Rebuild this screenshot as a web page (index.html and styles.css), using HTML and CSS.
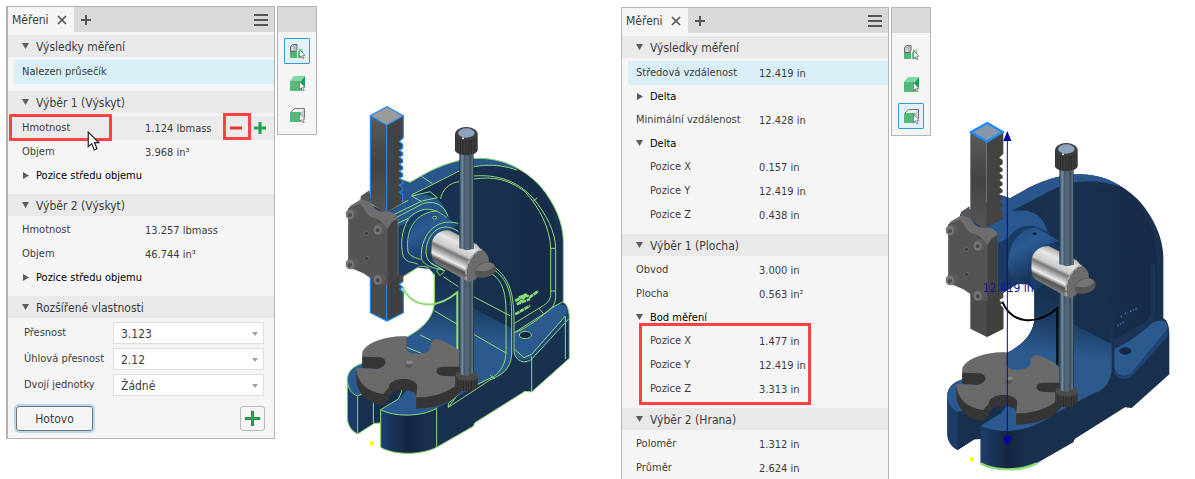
FILE: index.html
```html
<!DOCTYPE html>
<html lang="cs">
<head>
<meta charset="utf-8">
<title>Měření</title>
<link rel="stylesheet" href="styles.css">
</head>
<body>
<svg class="defs" aria-hidden="true">
  <defs>
    <symbol id="i-close" viewBox="0 0 10 10"><path d="M1 1l8 8M9 1l-8 8" stroke="#555" stroke-width="1.7"/></symbol>
    <symbol id="i-plus" viewBox="0 0 10 10"><path d="M5 0v10M0 5h10" stroke="#555" stroke-width="2"/></symbol>
    <symbol id="i-menu" viewBox="0 0 14 12"><path d="M0 1h14M0 6h14M0 11h14" stroke="#555" stroke-width="2"/></symbol>
    <symbol id="i-down" viewBox="0 0 7 7"><path d="M0 0h7L3.500 6z" fill="#5c5c5c"/></symbol>
    <symbol id="i-right" viewBox="0 0 7 7"><path d="M1 0l6 3.500L1 7z" fill="#5c5c5c"/></symbol>
    <symbol id="i-cursor" viewBox="0 0 12 19"><path d="M1 1v14l3.300-3 2.400 6 2.600-1.100L6.900 11H11z" fill="#fff" stroke="#1c1c2c" stroke-width="1.100"/></symbol>
    <g id="pointer"><path d="M10.500 6.500v8l2-1.700 1.300 3 1.300-.6-1.300-2.900h2.200z" fill="#fff" stroke="#666" stroke-width=".7"/></g>
    <symbol id="i-part" viewBox="0 0 17 17">
      <path d="M1 8h7v7H1z" fill="#4fb873"/><path d="M9 8h5v7H9z" fill="#62c986"/><path d="M11 6h3v2h-3z" fill="#8edba8"/>
      <path d="M1.500 3.500l2-2H8v5l-1.500 2h-5z" fill="#ccc" stroke="#666"/><path d="M1.500 3.500h4.500v4.500M6 3.500l2-2" fill="none" stroke="#999" stroke-width=".6"/>
      <use href="#pointer"/>
    </symbol>
    <symbol id="i-body" viewBox="0 0 17 17">
      <path d="M1 6h11v10H1z" fill="#55b97b"/><path d="M1 6l4-5h11l-4 5z" fill="#80d9a2"/><path d="M12 6l4-5v10l-4 5z" fill="#12a357"/>
      <use href="#pointer"/>
    </symbol>
    <symbol id="i-face" viewBox="0 0 17 17">
      <path d="M1.500 5.500l4-4h10v9l-4 4z" fill="#eee" stroke="#777"/><path d="M12 5l3-3v8l-3 4z" fill="#ccc"/><path d="M1 5h11v10H1z" fill="#55b97b"/>
      <use href="#pointer"/>
    </symbol>

    <linearGradient id="g-boss" x1="0" y1="0" x2=".5" y2="1"><stop offset="0" stop-color="#244c7e"/><stop offset=".4" stop-color="#2a5b94"/><stop offset="1" stop-color="#162c4e"/></linearGradient>
    <linearGradient id="g-floor" x1=".1" y1="0" x2="0" y2="1"><stop offset="0" stop-color="#17304f"/><stop offset=".22" stop-color="#1a3960"/><stop offset=".5" stop-color="#2b5a8e"/><stop offset="1" stop-color="#2b5a8e"/></linearGradient>
    <linearGradient id="g-front"><stop offset="0" stop-color="#1d3f6b"/><stop offset=".5" stop-color="#14243f"/><stop offset=".8" stop-color="#19304f"/></linearGradient>
    <linearGradient id="g-dome" x1="0" x2="1"><stop offset="0" stop-color="#193353"/><stop offset="1" stop-color="#162b47"/></linearGradient>
    <linearGradient id="g-rod"><stop offset="0" stop-color="#28394a"/><stop offset=".2" stop-color="#7590a5"/><stop offset=".35" stop-color="#43586a"/><stop offset=".55" stop-color="#566b7b"/><stop offset=".8" stop-color="#3b4d5b"/><stop offset=".9" stop-color="#687e8e"/><stop offset="1" stop-color="#26313a"/></linearGradient>
    <linearGradient id="g-knurl" x2=".12" spreadMethod="repeat"><stop offset="0" stop-color="#2a2a2a"/><stop offset=".5" stop-color="#404040"/><stop offset="1" stop-color="#2d2d2d"/></linearGradient>
    <linearGradient id="g-silver" gradientUnits="userSpaceOnUse" x1="400" y1="425" x2="350" y2="530"><stop offset="0" stop-color="#aaa"/><stop offset=".2" stop-color="#e6e6e6"/><stop offset=".42" stop-color="#c9c9c9"/><stop offset=".5" stop-color="#777"/><stop offset=".62" stop-color="#b9b9b9"/><stop offset=".72" stop-color="#eee"/><stop offset=".82" stop-color="#555"/><stop offset="1" stop-color="#888"/></linearGradient>
    <linearGradient id="g-bar" x2="0" y2="1"><stop offset="0" stop-color="#5a5a5a"/><stop offset=".5" stop-color="#444445"/><stop offset="1" stop-color="#545455"/></linearGradient>

    <path id="outline" d="M90 310L215 253L240 262L275 242C330 210 390 190 450 190C530 192 590 230 630 272C675 325 700 385 700 440V622L708 628C716 640 718 655 718 675V790L605 891L585 889L435 983L430 994L320 1057C270 1082 190 1080 152 1057V984L133 985L83 1017C65 1008 52 990 52 968V850C55 825 75 812 98 805L230 726C280 700 313 665 313 620V540L298 522C290 512 270 512 262 518L200 556L100 500Z"/>

    <g id="casting">
      <use href="#outline" fill="#19304f"/>
      <path d="M575 228C630 265 680 350 680 440V620L553 690V640C545 560 500 510 440 480L340 310C420 240 500 220 575 228Z" fill="url(#g-dome)"/>
      <path d="M662 460h15v165c0 12-8 18-20 26L553 715v-30l95-54c10-8 14-18 14-28z" fill="#1a3558"/>
      <path d="M240 262L275 242C330 210 390 190 450 190C500 191 540 203 575 228C500 203 430 205 370 235L245 300L300 322L200 375L90 310L215 253Z" fill="#2a568b"/>
      <path d="M200 375L245 300C300 280 355 330 360 380L390 410V530L313 540L298 522L262 518L203 556Z" fill="#1b3c66"/>
      <path d="M200 375L290 325C270 345 235 370 222 430C216 470 222 490 240 503L262 518L203 556Z" fill="#1c3b64"/>
      <path d="M170 348L245 300H290C325 305 345 330 352 362C300 330 260 345 235 380L205 395Z" fill="#29588f"/>
      <path d="M234 470C232 410 260 350 320 350L388 390C330 400 295 450 300 516C270 512 240 505 234 470Z" fill="url(#g-boss)"/>
      <ellipse cx="314" cy="368" rx="6" ry="4" fill="#10233f"/>
      <path d="M313 538L385 580L500 520C535 560 542 600 545 660V780C535 835 510 840 480 852L380 905L230 800V726C280 700 313 665 313 620Z" fill="url(#g-floor)"/>
      <path d="M313 538L430 570V640L545 700V640C542 580 520 540 490 515L380 500Z" fill="#17304e"/>
      <path d="M553 713C590 700 635 665 662 640C690 620 718 628 712 655L605 785C588 800 560 798 553 770Z" fill="#2b5a8e"/>
      <path d="M712 655L605 785C588 803 558 800 553 770V782C563 806 590 808 607 795L716 672Z" fill="#1e4478"/>
      <ellipse cx="586" cy="720" rx="18" ry="11" fill="#142845"/>
      <path d="M52 850C55 825 75 812 98 805L215 860V900L83 903C66 895 55 880 52 862Z" fill="#2a5a90"/>
      <path d="M83 903L215 880V905L152 945V984L133 985L83 1017Z" fill="#182f4d"/>
      <path d="M52 860C56 880 66 895 83 903V1017C65 1008 52 990 52 968Z" fill="#1c3c66"/>
      <path d="M152 944L215 905L260 840L390 880L350 925L320 940C270 968 190 965 152 944Z" fill="#2a5a90"/>
      <path d="M152 944C190 965 270 968 320 940V1057C270 1082 190 1080 152 1057Z" fill="url(#g-front)"/>
    </g>

    <path id="table-top" d="M97 770C110 745 160 722 230 724V762C232 778 280 784 298 765C305 745 300 735 318 732C350 738 400 765 410 800V815H340C315 815 312 838 335 842L400 845C380 880 330 907 258 907L262 875C262 845 180 840 176 878L160 897C110 890 80 860 79 818L140 822C175 815 172 790 150 787L97 785Z"/>
    <g id="screw"><path d="M-17 0C-15-16 5-22 12-16L18-8C20 8 8 16-2 16C-12 15-17 9-17 0Z" fill="#5c5c5d"/><ellipse cx="-4" cy="2" rx="12" ry="14" fill="#777778"/><ellipse cx="-4" cy="3" rx="6" ry="6" fill="#4a4a4c"/></g>

    <g id="column">
      <path d="M121 62L170 91V350L155 350L121 322Z" fill="url(#g-bar)"/>
      <path d="M170 91L220 62V128L208 140L218 147V160L208 165L218 173V181L208 186L218 194V202L208 207L218 215V223L208 228L218 236V244L208 249L218 257V265L208 270L218 278V286L208 291L218 299V324L170 350Z" fill="#434344"/>
      <path d="M121 540H220V560L208 567L218 577L210 582L220 592V653L171 678L121 653Z" fill="#4b4b4c"/>
      <path d="M170 540H208V577L220 592V653L170 678Z" fill="#404041"/>
    </g>

    <g id="fittings">
      <path d="M92 304L118 286L124 325L95 315Z" fill="#555556"/>
      <path d="M60 333L95 312L120 322C130 335 140 352 165 350H180C195 355 203 365 203 372V545L172 570L140 560L100 530L55 515V345Z" fill="#6e6e70"/>
      <path d="M55 340L88 326C105 335 105 360 125 367C145 368 160 385 172 402V570L140 562L100 535L55 515Z" fill="#545456"/>
      <path d="M172 402C180 388 190 376 203 372V545L172 570Z" fill="#424244"/>
      <use href="#screw" x="64" y="357"/><use href="#screw" x="147" y="403"/><use href="#screw" x="64" y="507"/><use href="#screw" x="147" y="553"/>
      <g fill="#3c3c3e" stroke="#68686a" stroke-width="3"><ellipse cx="110" cy="415" rx="7" ry="6"/><ellipse cx="110" cy="490" rx="7" ry="6"/></g>

      <path d="M388 545H431V850H388Z" fill="url(#g-rod)"/>
      <path d="M305 455C302 425 330 402 357 406L440 448L475 490L412 559L315 505C304 493 303 475 305 455Z" fill="url(#g-silver)"/>
      <path d="M410 556C400 520 425 470 455 463C474 473 481 495 474 512L437 553L422 561Z" fill="#6d6c6c"/>
      <path d="M410 556C400 520 425 470 455 463" fill="none" stroke="#aaa" stroke-width="5" stroke-dasharray="12 5"/>
      <path d="M435 530C435 505 465 500 480 502C500 507 500 523 493 533C480 548 455 552 438 545Z" fill="#555557"/>
      <path d="M435 528C438 510 465 500 482 503C500 510 490 520 480 524C462 532 448 525 435 528Z" fill="#757577"/>
      <path d="M388 170H431V462L410 466L388 460Z" fill="url(#g-rod)"/>
      <path d="M375 118C377 92 440 92 443 118V166C440 185 378 185 375 166Z" fill="url(#g-knurl)"/>
      <ellipse cx="409" cy="116" rx="33" ry="20" fill="#3c3c3c"/><ellipse cx="409" cy="114" rx="25" ry="14" fill="#8ba3bb"/>
      <circle cx="399" cy="130" r="3" fill="#fff"/>

      <g fill="#363637"><use href="#table-top" y="34"/><use href="#table-top" y="26"/><use href="#table-top" y="18"/><use href="#table-top" y="10"/></g>
      <use href="#table-top" fill="#6a6a6b"/>
      <path d="M227 802L239 794L250 800V812L239 820L227 815Z" fill="#5a5a5b"/><ellipse cx="239" cy="802" rx="11" ry="6" fill="#858586"/>
      <path d="M388 700H431V845H388Z" fill="url(#g-rod)"/>
      <path d="M376 842C382 828 388 830 388 832V838C395 846 425 846 431 838V830C438 832 443 838 443 846V872C438 894 380 894 376 872Z" fill="url(#g-knurl)"/>
      <path d="M376 842C378 828 388 826 388 832C392 846 428 846 431 830C440 830 443 838 443 846C436 862 385 862 376 842Z" fill="#4b4b4b"/>
      <path d="M120 1039h12v12h-12z" fill="#ff0"/>
    </g>
  </defs>
</svg>

<main class="page">
  <section class="scene">
    <div class="panel panel--docked">
      <header class="tabs">
        <div class="tab">Měřeni <button class="icon-btn" aria-label="Zavřít"><svg class="i10"><use href="#i-close"/></svg></button></div>
        <button class="icon-btn tabs__add" aria-label="Přidat"><svg class="i10"><use href="#i-plus"/></svg></button>
        <button class="icon-btn tabs__menu" aria-label="Nabídka"><svg class="i-menu"><use href="#i-menu"/></svg></button>
      </header>

      <button class="head"><svg class="i7"><use href="#i-down"/></svg>Výsledky měření</button>
      <div class="rows"><p class="row row--info">Nalezen průsečík</p></div>

      <button class="head"><svg class="i7"><use href="#i-down"/></svg>Výběr 1 (Výskyt)</button>
      <dl class="rows">
        <div class="row row--hover">
          <dt>Hmotnost</dt><dd>1.124 lbmass</dd>
          <button class="icon-btn row__minus" aria-label="Odebrat"><svg class="i12" viewBox="0 0 12 12"><path d="M0 6h12" stroke="#e8362f" stroke-width="3"/></svg></button>
          <button class="icon-btn row__plus" aria-label="Přidat"><svg class="i12" viewBox="0 0 12 12"><path d="M6 0v12M0 6h12" stroke="#1fa34a" stroke-width="3"/></svg></button>
          <span class="mark mark--label"></span><span class="mark mark--minus"></span>
          <svg class="cursor"><use href="#i-cursor"/></svg>
        </div>
        <div class="row"><dt>Objem</dt><dd>3.968 in³</dd></div>
        <div class="row row--fold"><dt><button class="fold__btn"><svg class="i7"><use href="#i-right"/></svg>Pozice středu objemu</button></dt></div>
      </dl>

      <button class="head"><svg class="i7"><use href="#i-down"/></svg>Výběr 2 (Výskyt)</button>
      <dl class="rows">
        <div class="row"><dt>Hmotnost</dt><dd>13.257 lbmass</dd></div>
        <div class="row"><dt>Objem</dt><dd>46.744 in³</dd></div>
        <div class="row row--fold"><dt><button class="fold__btn"><svg class="i7"><use href="#i-right"/></svg>Pozice středu objemu</button></dt></div>
      </dl>

      <button class="head"><svg class="i7"><use href="#i-down"/></svg>Rozšířené vlastnosti</button>
      <form class="form">
        <label for="p1">Přesnost</label><span class="pick"><select id="p1"><option>3.123</option></select><svg class="pick__arrow" viewBox="0 0 6 4"><path d="M0 0h6L3 4z"/></svg></span>
        <label for="p2">Úhlová přesnost</label><span class="pick"><select id="p2"><option>2.12</option></select><svg class="pick__arrow" viewBox="0 0 6 4"><path d="M0 0h6L3 4z"/></svg></span>
        <label for="p3">Dvojí jednotky</label><span class="pick"><select id="p3"><option>Žádné</option></select><svg class="pick__arrow" viewBox="0 0 6 4"><path d="M0 0h6L3 4z"/></svg></span>
      </form>
      <footer class="foot">
        <button class="done">Hotovo</button>
        <button class="add" aria-label="Přidat"><svg class="i15" viewBox="0 0 15 15"><path d="M7.500 0v15M0 7.500h15" stroke="#178a3e" stroke-width="3"/><path d="M7.500 1v13M1 7.500h13" stroke="#27b257" stroke-width="1.500"/></svg></button>
      </footer>
    </div>

    <aside class="tools">
      <button class="tool tool--on" aria-label="Součást"><svg class="i17"><use href="#i-part"/></svg></button>
      <button class="tool" aria-label="Těleso"><svg class="i17"><use href="#i-body"/></svg></button>
      <button class="tool" aria-label="Plocha"><svg class="i17"><use href="#i-face"/></svg></button>
    </aside>

    <svg class="model" viewBox="42 0 708 1095" role="img" aria-label="Model lisu">
      <use href="#casting"/>
      <g fill="none" stroke="#8edb76" stroke-width="3">
        <use href="#outline"/>
        <path d="M275 244L307 266M245 300L370 237C420 208 500 202 560 225M332 312C335 285 360 262 388 260M431 252C490 245 530 250 585 290C630 340 660 400 662 460V602C660 618 650 625 640 632L553 685M431 243C500 238 560 255 610 310C650 360 676 410 677 460V608C675 630 665 640 655 648L553 713M610 318L622 308M662 460H677M662 588H677M627 640L640 655"/>
        <path d="M203 372V545M90 310L170 352M120 296L90 310M170 348L235 316M185 362L275 318L322 308L300 290L245 303L275 320M190 372L280 325C320 315 345 335 354 365M203 385L235 370C260 345 300 325 350 368"/>
        <path d="M235 372C215 405 210 450 220 485C232 505 248 500 265 508M320 348C260 352 225 400 234 470C240 485 262 490 272 493M385 385C310 365 270 430 274 490C280 512 310 520 340 525M385 410C340 375 290 410 288 470C288 495 305 512 330 518"/>
        <ellipse cx="314" cy="368" rx="6" ry="4"/>
        <path d="M320 528L330 518L342 530L330 542ZM340 545L385 575M300 502L345 528M313 538V620M313 647L382 688M431 605L540 662M431 718L530 775M270 720L302 735M230 757L275 775"/>
        <path d="M470 530C515 545 528 590 528 650V775C525 820 500 838 490 845L431 873M485 520C535 550 545 600 545 660V780C540 820 525 835 480 855L355 937M492 515C540 550 552 600 552 680V770C560 806 590 805 605 792L716 672M553 713C590 700 635 665 662 640L700 620M553 762L582 788L605 778L706 663M706 663V792M605 785V890M355 937L390 890M375 908L355 925V937M480 840L495 852"/>
        <ellipse cx="586" cy="720" rx="18" ry="11"/>
        <path d="M152 944C190 965 270 968 320 940V1057M152 944V984M152 944L205 912L215 890V880M130 885V985M83 903V1017M52 860C56 885 66 897 83 903L100 895M382 592V770" />
        <path d="M217 575C245 640 320 645 382 592V770" stroke-width="6"/>
        <path d="M556 618L585 600L600 606L625 588M560 628L600 612M556 658L600 632M566 608L590 598L570 622" stroke-width="8" stroke-dasharray="14 2"/>
      </g>
      <use href="#column"/>
      <path d="M121 62L171 35L220 62L170 91Z" fill="#9b9b9c"/>
      <path d="M121 322V62L171 35L220 62L170 91L121 62M170 91V350M220 62V128L208 140L218 147V160L208 165L218 173V181L208 186L218 194V202L208 207L218 215V223L208 228L218 236V244L208 249L218 257V265L208 270L218 278V286L208 291L218 299V324M121 545V653L171 678L220 653V592L210 582L218 577L208 567L218 560M170 560V678" fill="none" stroke="#1e88f5" stroke-width="3.500"/>
      <use href="#fittings"/>
    </svg>
  </section>

  <section class="scene scene--second">
    <div class="panel panel--open">
      <header class="tabs">
        <div class="tab">Měřeni <button class="icon-btn" aria-label="Zavřít"><svg class="i10"><use href="#i-close"/></svg></button></div>
        <button class="icon-btn tabs__add" aria-label="Přidat"><svg class="i10"><use href="#i-plus"/></svg></button>
        <button class="icon-btn tabs__menu" aria-label="Nabídka"><svg class="i-menu"><use href="#i-menu"/></svg></button>
      </header>

      <button class="head"><svg class="i7"><use href="#i-down"/></svg>Výsledky měření</button>
      <dl class="rows">
        <div class="row row--info"><dt>Středová vzdálenost</dt><dd>12.419 in</dd></div>
        <div class="row row--fold"><dt><button class="fold__btn"><svg class="i7"><use href="#i-right"/></svg>Delta</button></dt></div>
        <div class="row"><dt>Minimální vzdálenost</dt><dd>12.428 in</dd></div>
        <div class="row row--fold"><dt><button class="fold__btn"><svg class="i7"><use href="#i-down"/></svg>Delta</button></dt></div>
        <div class="row"><dt class="sub">Pozice X</dt><dd>0.157 in</dd></div>
        <div class="row"><dt class="sub">Pozice Y</dt><dd>12.419 in</dd></div>
        <div class="row"><dt class="sub">Pozice Z</dt><dd>0.438 in</dd></div>
      </dl>

      <button class="head"><svg class="i7"><use href="#i-down"/></svg>Výběr 1 (Plocha)</button>
      <dl class="rows rows--marked">
        <div class="row"><dt>Obvod</dt><dd>3.000 in</dd></div>
        <div class="row"><dt>Plocha</dt><dd>0.563 in²</dd></div>
        <div class="row row--fold"><dt><button class="fold__btn"><svg class="i7"><use href="#i-down"/></svg>Bod měření</button></dt></div>
        <div class="row"><dt class="sub">Pozice X</dt><dd>1.477 in</dd></div>
        <div class="row"><dt class="sub">Pozice Y</dt><dd>12.419 in</dd></div>
        <div class="row"><dt class="sub">Pozice Z</dt><dd>3.313 in</dd></div>
      </dl>

      <button class="head"><svg class="i7"><use href="#i-down"/></svg>Výběr 2 (Hrana)</button>
      <dl class="rows">
        <div class="row"><dt>Poloměr</dt><dd>1.312 in</dd></div>
        <div class="row"><dt>Průměr</dt><dd>2.624 in</dd></div>
      </dl>
    </div>

    <aside class="tools">
      <button class="tool" aria-label="Součást"><svg class="i17"><use href="#i-part"/></svg></button>
      <button class="tool" aria-label="Těleso"><svg class="i17"><use href="#i-body"/></svg></button>
      <button class="tool tool--on" aria-label="Plocha"><svg class="i17"><use href="#i-face"/></svg></button>
    </aside>

    <svg class="model" viewBox="42 0 708 1095" role="img" aria-label="Model lisu s kótou">
      <use href="#casting"/>
      <path d="M572 618l6-4m6-6l10-4m6-2l24-12M562 645l24-14" stroke="#3667a5" stroke-width="5" stroke-dasharray="5 4"/>
      <path d="M217 572C245 640 320 645 382 592V770" fill="none" stroke="#000" stroke-width="6"/>
      <use href="#column"/>
      <path d="M123 63L172 36L218 63L171 92Z" fill="#8797ab" stroke="#1e88f5" stroke-width="7"/>
      <use href="#fittings"/>
      <path d="M152 1057C190 1080 270 1082 320 1057" fill="none" stroke="#8edb76" stroke-width="7"/>
      <path d="M232 66V1000" stroke="#0a0a9c" stroke-width="3"/>
      <path d="M232 60L244 90H220ZM232 1004L221 986V976H243V986Z" fill="#0000a8"/>
      <text class="dim" x="158" y="544">12.419 in</text>
    </svg>
  </section>
</main>
</body>
</html>
```
FILE: styles.css
```css
* { box-sizing: border-box; }
body {
  margin: 0;
  height: 100vh;
  overflow: hidden;
  background: #fff;
  color: #3c3c3c;
  font: 11px/22px "DejaVu Sans Condensed", "DejaVu Sans", sans-serif;
}
button, select { font: inherit; color: inherit; }
button { padding: 0; border: 0; background: none; text-align: left; }
dl, dd, p { margin: 0; }
svg { display: block; flex: none; }
.defs { position: absolute; width: 0; height: 0; }

.page {
  display: grid;
  grid-template-columns: 615fr 574fr;
  align-items: start;
  padding-left: 6px;
}
.scene { display: flex; align-items: flex-start; gap: 2px; padding-top: 6px; }
.scene--second { padding-top: 7px; }

.panel { flex: 0 1 269px; border: 1px solid #b4b6b6; background: #f5f5f5; }
.panel--docked { border-left-width: 2px; }
.panel--open { flex-basis: 268px; }

.tabs { display: flex; align-items: center; height: 25px; margin-bottom: 3px; background: #d9d9d9; }
.tab { display: flex; align-items: center; gap: 8px; height: 25px; padding: 0 7px 0 4px; background: #f5f5f5; font-size: 12px; }
.tabs__add { margin-left: 7px; }
.tabs__menu { margin-left: auto; margin-right: 6px; }

.i7 { width: 7px; height: 7px; }
.i10 { width: 10px; height: 10px; }
.i12 { width: 12px; height: 12px; }
.i15 { width: 15px; height: 15px; }
.i17 { width: 17px; height: 17px; }
.i-menu { width: 14px; height: 12px; }

.head {
  display: flex;
  align-items: center;
  gap: 7px;
  width: 100%;
  height: 22px;
  padding: 1px 0 0 14px;
  background: #e9e9e9;
  font-size: 12px;
}
.rows { position: relative; padding: 2px 0 7px; }
.row {
  position: relative;
  display: grid;
  grid-template-columns: 123px 1fr auto auto;
  align-items: center;
  height: 24px;
  padding-left: 14px;
  white-space: nowrap;
}
.row--info, .row--hover { margin-top: 1px; }
.row--info { margin-left: 6px; padding-left: 8px; background: #d9eff7; }
.row--hover { background: #ebebeb; }
.row--fold { height: 23px; }
.row dd { padding-top: 1px; }
.row__minus { margin-right: 12px; }
.row__plus { margin-right: 8px; }
.sub { padding-left: 14px; }
.fold__btn { display: flex; align-items: center; gap: 7px; color: #000; }

.mark, .rows--marked::after { position: absolute; border: 3px solid #fb4245; }
.mark--label { left: 1px; top: -2px; width: 103px; height: 27px; }
.mark--minus { right: 23px; top: -3px; width: 28px; height: 27px; }
.rows--marked::after { content: ""; left: 17px; right: 77px; bottom: 3px; height: 76px; }
.cursor { position: absolute; z-index: 1; left: 79px; top: 15px; width: 13px; height: 20px; }

.form {
  display: grid;
  grid-template-columns: 89px 1fr;
  row-gap: 4px;
  align-items: center;
  padding: 4px 10px 10px 16px;
  white-space: nowrap;
}
.pick { position: relative; }
.pick select {
  display: block;
  width: 100%;
  height: 22px;
  padding: 0 7px;
  border: 1px solid #dedede;
  border-radius: 0;
  background: #fff;
  font-size: 12px;
  appearance: none;
}
.pick__arrow { position: absolute; right: 6px; top: 10px; width: 6px; height: 4px; fill: #a0a0a0; pointer-events: none; }

.foot { display: flex; justify-content: space-between; padding: 0 9px 7px 8px; }
.done, .add { height: 25px; border: 1px solid #b8b8b8; border-radius: 3px; }
.done { width: 77px; border-color: #707478; box-shadow: 0 0 0 2px #b7d9ea; font-size: 12px; text-align: center; }
.add { display: grid; place-items: center; width: 25px; }

.tools {
  display: flex;
  flex: 0 0 40px;
  flex-direction: column;
  align-items: center;
  gap: 6px;
  padding-bottom: 6px;
  border: 1px solid #b4b6b6;
  background: #f5f5f5;
}
.tools::before { content: ""; align-self: stretch; height: 25px; background: #d9d9d9; }
.tool { display: grid; place-items: center; width: 26px; height: 26px; border: 1px solid transparent; }
.tool--on { border-color: #2a9fd6; border-radius: 1px; background: #e2f0f8; }

.model { flex: 0 1 236px; min-width: 0; margin: 89px 0 0 25px; }
.scene--second .model { margin-top: 104px; margin-left: 11px; }
.dim { fill: #14149a; font-size: 36px; }
```
